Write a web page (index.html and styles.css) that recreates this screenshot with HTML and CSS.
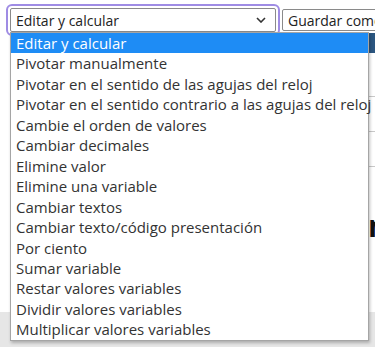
FILE: index.html
```html
<!DOCTYPE html>
<html lang="es">
<head>
  <meta charset="UTF-8" />
  <meta name="viewport" content="width=device-width, initial-scale=1.0" />
  <title>Editar y calcular</title>
  <link rel="stylesheet" href="styles.css">
</head>
<body>
  <div class="toolbar">
    <div class="select focused">
      <span>Editar y calcular</span>
      <svg class="chevron" width="10" height="6" viewBox="0 0 10 6"><path d="M1 1l4 4 4-4" fill="none" stroke="#333" stroke-width="1.6"/></svg>
    </div>
    <div class="select second">
      <span>Guardar como</span>
    </div>
  </div>

  <div class="page">
    <div class="side"></div>
    <div class="main">
      <div class="bar"></div>
      <div class="rule first"></div>
      <div class="rule"></div>
      <div class="rule"></div>
      <h2 class="title">n</h2>
    </div>
  </div>
  <div class="footer-band"></div>

  <ul class="dropdown">
    <li class="selected">Editar y calcular</li>
    <li>Pivotar manualmente</li>
    <li>Pivotar en el sentido de las agujas del reloj</li>
    <li>Pivotar en el sentido contrario a las agujas del reloj</li>
    <li>Cambie el orden de valores</li>
    <li>Cambiar decimales</li>
    <li>Elimine valor</li>
    <li>Elimine una variable</li>
    <li>Cambiar textos</li>
    <li>Cambiar texto/código presentación</li>
    <li>Por ciento</li>
    <li>Sumar variable</li>
    <li>Restar valores variables</li>
    <li>Dividir valores variables</li>
    <li>Multiplicar valores variables</li>
  </ul>
</body>
</html>
```

FILE: styles.css
```css
* { margin: 0; padding: 0; box-sizing: border-box; }
body {
  font-family: 'Open Sans', 'Noto Sans', sans-serif;
  background: #fff;
  color: #222;
  overflow: hidden;
  width: 375px;
  height: 347px;
  position: relative;
}
.toolbar {
  display: flex;
  align-items: center;
  gap: 6px;
  padding: 8px 0 0 10px;
  height: 32px;
}
.select {
  height: 24px;
  border: 1px solid #8a8a8a;
  border-radius: 2px;
  display: flex;
  align-items: center;
  padding: 0 5px;
  font-size: 14px;
  color: #222;
  background: #fff;
  white-space: nowrap;
  flex-shrink: 0;
}
.select.focused {
  width: 266px;
  justify-content: space-between;
  outline: 2px solid #9f8ce4;
  outline-offset: 2px;
}
.chevron { margin-right: 4px; }
.select.second {
  height: 22px;
  width: 120px;
}
.page {
  display: grid;
  grid-template-columns: 358px 17px;
}
.main {
  padding-top: 1px;
  overflow: hidden;
}
.bar {
  height: 20px;
  background: #2b5680;
}
.rule {
  height: 1px;
  background: #c8c8c8;
  margin-top: 34px;
}
.rule.first { margin-top: 43px; }
.title {
  font-size: 30px;
  font-weight: 700;
  line-height: 1;
  color: #111;
  margin: 44px 0 0 10px;
}
.footer-band {
  position: absolute;
  left: 0;
  right: 0;
  top: 312px;
  bottom: 0;
  background: #e6e6e6;
  z-index: -1;
}
.dropdown {
  list-style: none;
  position: absolute;
  top: 32px;
  left: 10px;
  width: 359px;
  background: #fff;
  border: 1px solid #a5a5a5;
  box-shadow: 1px 2px 3px rgba(0, 0, 0, 0.25);
  font-size: 15px;
  color: #333;
}
.dropdown li {
  padding-left: 5px;
  line-height: 20.45px;
  white-space: nowrap;
}
.dropdown li.selected {
  background: #1e8cf5;
  color: #fff;
}
```
